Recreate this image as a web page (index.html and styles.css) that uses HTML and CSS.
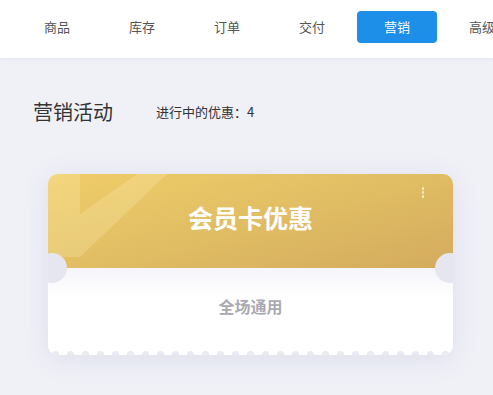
FILE: index.html
```html
<!DOCTYPE html>
<html lang="zh">
<head>
<meta charset="utf-8">
<title>营销活动</title>
<link rel="stylesheet" href="styles.css">
</head>
<body>
<nav class="topnav">
  <a class="tab">商品</a>
  <a class="tab">库存</a>
  <a class="tab">订单</a>
  <a class="tab">交付</a>
  <a class="tab active">营销</a>
  <a class="tab">高级</a>
</nav>
<main class="page">
  <div class="page-head">
    <h1 class="page-title">营销活动</h1>
    <span class="count">进行中的优惠：4</span>
  </div>
  <div class="coupon">
    <div class="coupon-top">
      <svg class="deco" width="170" height="94" viewBox="0 0 170 94">
        <polygon points="0,0 32,0 32,40 89,0 119,0 32,83 0,83" fill="#fff3c0" fill-opacity="0.24"/>
      </svg>
      <div class="coupon-title">会员卡优惠</div>
      <div class="more"><i></i><i></i><i></i></div>
    </div>
    <div class="coupon-body">
      <div class="coupon-desc">全场通用</div>
      <div class="edge"></div>
    </div>
  </div>
</main>
</body>
</html>
```
FILE: styles.css
```css
* { box-sizing: border-box; }
html, body {
  margin: 0;
  padding: 0;
  background: #f0f1f7;
  font-family: "Noto Sans CJK SC", "Liberation Sans", sans-serif;
  width: 493px;
  height: 395px;
  overflow: hidden;
}
.topnav {
  height: 58px;
  background: #ffffff;
  display: flex;
  align-items: flex-start;
  gap: 5px;
  padding: 11px 0 0 17px;
  box-shadow: 0 1px 4px rgba(60, 60, 100, 0.07);
  position: relative;
  white-space: nowrap;
}
.tab {
  flex: 0 0 80px;
  height: 32px;
  line-height: 32px;
  text-align: center;
  font-size: 13px;
  color: #555;
  border-radius: 4px;
}
.tab.active {
  background: #1d8fe9;
  color: #fff;
}
.page {
  padding: 40px 0 0 33px;
}
.page-head {
  display: flex;
  align-items: center;
  gap: 43px;
  height: 28px;
}
.page-title {
  margin: 0;
  font-size: 20px;
  font-weight: normal;
  color: #333;
  line-height: 28px;
}
.count {
  font-size: 13px;
  color: #333;
  line-height: 28px;
}
.coupon {
  margin: 48px 0 0 15px;
  width: 405px;
  border-radius: 10px;
  box-shadow: 0 4px 26px rgba(120, 124, 180, 0.16);
  overflow: hidden;
  position: relative;
}
.coupon-top {
  position: relative;
  height: 94px;
  background: linear-gradient(165deg, #f0cd68 0%, #e2bf64 45%, #d4ab5e 100%);
  display: flex;
  align-items: center;
  justify-content: center;
}
.deco {
  position: absolute;
  left: 0;
  top: 0;
}
.coupon-title {
  position: relative;
  color: #fff;
  font-size: 25px;
  font-weight: bold;
  line-height: 30px;
  margin-top: -9px;
}
.more {
  position: absolute;
  right: 29px;
  top: 13px;
  display: flex;
  flex-direction: column;
  gap: 1.5px;
}
.more i {
  display: block;
  width: 2.5px;
  height: 2.5px;
  border-radius: 50%;
  background: #fbf0c8;
}
.coupon-body {
  position: relative;
  background: linear-gradient(180deg, #f5f5fa 0%, #ffffff 30px);
}
.coupon-body::before,
.coupon-body::after {
  content: "";
  position: absolute;
  top: -15px;
  width: 30px;
  height: 30px;
  border-radius: 50%;
  background: #e5e6f0;
}
.coupon-body::before { left: -11px; }
.coupon-body::after { right: -12px; }
.coupon-desc {
  height: 82px;
  padding-top: 26px;
  text-align: center;
  font-size: 16px;
  font-weight: bold;
  color: #a9a9b1;
  line-height: 24px;
}
.edge {
  height: 5px;
  background: radial-gradient(circle at 7.5px 5px, #e9eaf2 0, #e9eaf2 3.5px, #ffffff 4.2px);
  background-size: 15px 5px;
  background-repeat: repeat-x;
}
```
